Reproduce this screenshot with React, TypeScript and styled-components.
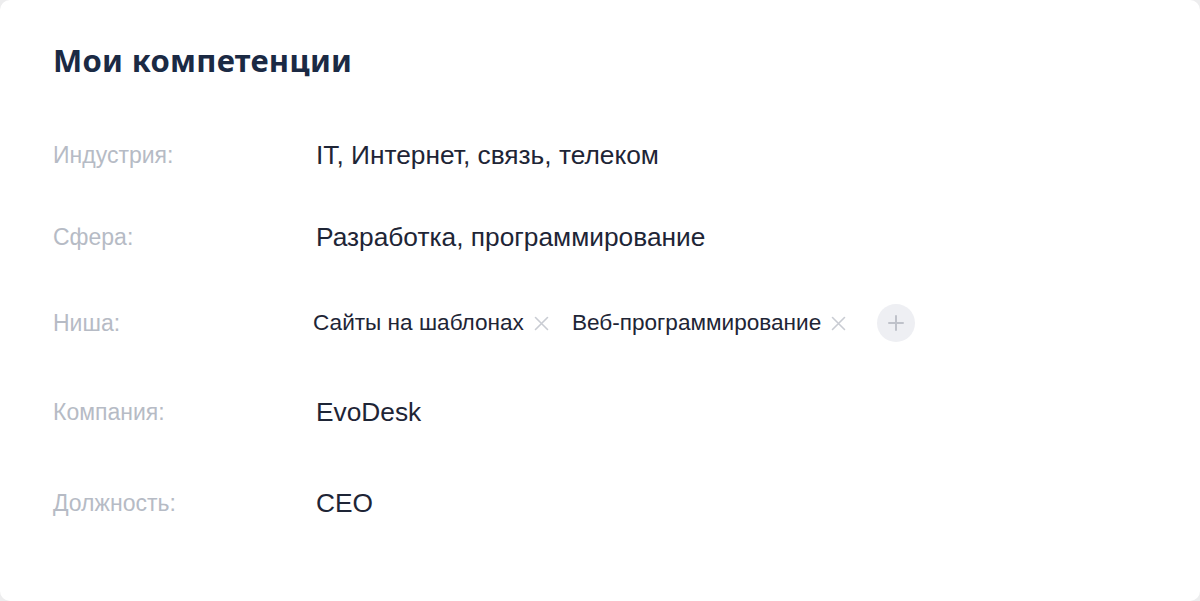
import React from "react";
import styled, { createGlobalStyle } from "styled-components";

const Global = createGlobalStyle`
  html, body { margin: 0; padding: 0; background: #ededee; }
  #root { width: 1200px; height: 601px; }
  * { box-sizing: border-box; }
`;

const Card = styled.section`
  width: 1200px;
  height: 601px;
  background: #ffffff;
  border-radius: 10px;
  padding: 40px 53px 0 53px;
  font-family: "Liberation Sans", Arial, sans-serif;
`;

const Title = styled.h1`
  margin: 0;
  font-family: "Noto Sans", "Open Sans", sans-serif;
  font-weight: 700;
  font-size: 31px;
  line-height: 40px;
  color: #1b2a44;
  letter-spacing: 0.3px;
`;

const List = styled.div`
  display: flex;
  flex-direction: column;
  margin-top: 55px;
`;

const Row = styled.div<{ $space: number; $h: number }>`
  display: grid;
  grid-template-columns: 263px 1fr;
  align-items: center;
  height: ${(p) => p.$h}px;
  margin-top: ${(p) => p.$space}px;
`;

const Label = styled.div`
  font-size: 23px;
  color: #b6bbc5;
`;

const Value = styled.div`
  font-size: 26.3px;
  color: #1e2536;
`;

const Chips = styled.div`
  display: flex;
  align-items: center;
  margin-left: -3px;
`;

const Chip = styled.span`
  display: inline-flex;
  align-items: center;
  gap: 10px;
  font-size: 22.6px;
  color: #1e2536;
  margin-right: 23px;
`;

const Remove = styled.span`
  display: inline-flex;
  width: 15px;
  height: 15px;
  color: #c9ccd3;
`;

const AddButton = styled.span`
  display: inline-flex;
  align-items: center;
  justify-content: center;
  width: 38px;
  height: 38px;
  border-radius: 50%;
  background: #eeeff3;
  color: #bfc2ca;
  margin-left: 8px;
`;

const Cross = () => (
  <svg width="15" height="15" viewBox="0 0 15 15">
    <path d="M1.5 1.5 L13.5 13.5 M13.5 1.5 L1.5 13.5" stroke="currentColor" strokeWidth="1.6" strokeLinecap="round" />
  </svg>
);

const Plus = () => (
  <svg width="18" height="18" viewBox="0 0 18 18">
    <path d="M9 2 V16 M2 9 H16" stroke="currentColor" strokeWidth="2" strokeLinecap="round" />
  </svg>
);

type Item = { label: string; value?: string; chips?: string[]; space: number; h: number };

const items: Item[] = [
  { label: "Индустрия:", value: "IT, Интернет, связь, телеком", space: 0, h: 40 },
  { label: "Сфера:", value: "Разработка, программирование", space: 42, h: 40 },
  { label: "Ниша:", chips: ["Сайты на шаблонах", "Веб-программирование"], space: 42, h: 48 },
  { label: "Компания:", value: "EvoDesk", space: 45, h: 40 },
  { label: "Должность:", value: "CEO", space: 51, h: 40 },
];

export default function App() {
  return (
    <>
      <Global />
      <Card>
        <Title>Мои компетенции</Title>
        <List>
          {items.map((it) => (
            <Row key={it.label} $space={it.space} $h={it.h}>
              <Label>{it.label}</Label>
              {it.chips ? (
                <Chips>
                  {it.chips.map((c) => (
                    <Chip key={c}>
                      {c}
                      <Remove>
                        <Cross />
                      </Remove>
                    </Chip>
                  ))}
                  <AddButton>
                    <Plus />
                  </AddButton>
                </Chips>
              ) : (
                <Value>{it.value}</Value>
              )}
            </Row>
          ))}
        </List>
      </Card>
    </>
  );
}
